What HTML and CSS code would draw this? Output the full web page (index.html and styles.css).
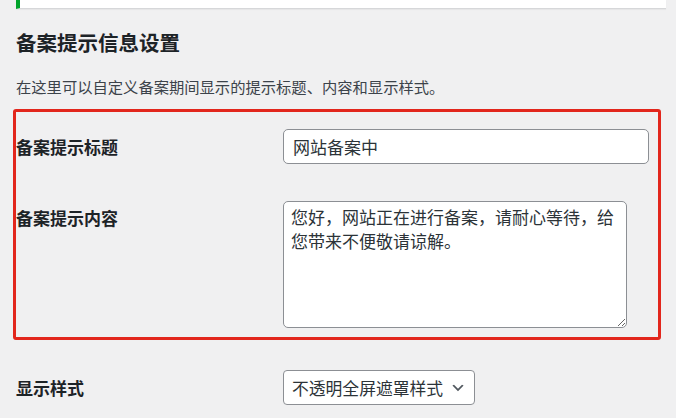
FILE: index.html
```html
<!DOCTYPE html>
<html lang="zh-CN">
<head>
<meta charset="utf-8">
<title>备案提示信息设置</title>
<link rel="stylesheet" href="styles.css">
</head>
<body>
<div class="wrap">
  <div class="notice"></div>
  <h2 class="title">备案提示信息设置</h2>
  <p class="desc">在这里可以自定义备案期间显示的提示标题、内容和显示样式。</p>
  <div class="highlight">
    <div class="row row-first">
      <label class="label label-mid" for="t">备案提示标题</label>
      <input class="text-input" id="t" type="text" value="网站备案中">
    </div>
    <div class="row row-second">
      <label class="label label-top" for="c">备案提示内容</label>
      <textarea class="textarea" id="c">您好，网站正在进行备案，请耐心等待，给您带来不便敬请谅解。</textarea>
    </div>
  </div>
  <div class="row row-third">
    <label class="label label-mid" for="s">显示样式</label>
    <div class="select-wrap">
      <select class="select" id="s"><option>不透明全屏遮罩样式</option></select>
      <svg class="chev" viewBox="0 0 20 20" width="16" height="16" aria-hidden="true"><path d="M5 6l5 5 5-5 2 1-7 7-7-7 2-1z" fill="#50575e"/></svg>
    </div>
  </div>
</div>
</body>
</html>
```
FILE: styles.css
```css
* { box-sizing: border-box; }
html, body {
  margin: 0;
  padding: 0;
  background: #f0f0f1;
}
body {
  font-family: "Noto Sans CJK SC", "Noto Sans", sans-serif;
  color: #1d2327;
  overflow: hidden;
}
.wrap {
  padding-left: 13px;
  width: 676px;
}
.notice {
  margin-left: 3px;
  width: 650px;
  height: 9px;
  background: #fff;
  border-left: 4px solid #00a32a;
  border-bottom: 1px solid #d6d7d9;
  box-shadow: 0 1px 1px rgba(0,0,0,.04);
}
.title {
  margin: 20px 0 0 3px;
  font-size: 20.5px;
  line-height: 26px;
  font-weight: 700;
  color: #1d2327;
}
.desc {
  margin: 20px 0 0 3px;
  font-size: 15.3px;
  line-height: 22px;
  color: #3c434a;
}
.highlight {
  margin-top: 12px;
  width: 648px;
  border: 3px solid #e2261c;
  border-radius: 3px;
  padding: 0 0 9px 0;
}
.row {
  display: grid;
  grid-template-columns: 267px 1fr;
  align-items: start;
}
.row-first { padding-top: 17px; }
.row-second { margin-top: 37px; }
.row-third { margin-top: 30px; padding-left: 3px; }
.label {
  font-size: 17px;
  font-weight: 700;
  color: #1d2327;
}
.label-mid { line-height: 35px; }
.label-top { line-height: 22px; padding-top: 6px; }
.text-input {
  width: 366px;
  height: 35px;
  padding: 0 9px;
  font-family: inherit;
  font-size: 17px;
  color: #2c3338;
  background: #fff;
  border: 1px solid #8c8f94;
  border-radius: 5px;
  outline: none;
}
.textarea {
  display: block;
  width: 344px;
  height: 127px;
  padding: 3px 7px;
  font-family: inherit;
  font-size: 17px;
  line-height: 24px;
  color: #2c3338;
  background: #fff;
  border: 1px solid #8c8f94;
  border-radius: 5px;
  outline: none;
}
.select-wrap {
  position: relative;
  width: 192px;
  height: 35px;
}
.select {
  appearance: none;
  -webkit-appearance: none;
  width: 192px;
  height: 35px;
  padding: 0 28px 0 8px;
  font-family: inherit;
  font-size: 16.8px;
  color: #2c3338;
  background: #fff;
  border: 1px solid #8c8f94;
  border-radius: 4px;
  outline: none;
}
.chev {
  position: absolute;
  right: 9px;
  top: 10px;
  pointer-events: none;
}
```
